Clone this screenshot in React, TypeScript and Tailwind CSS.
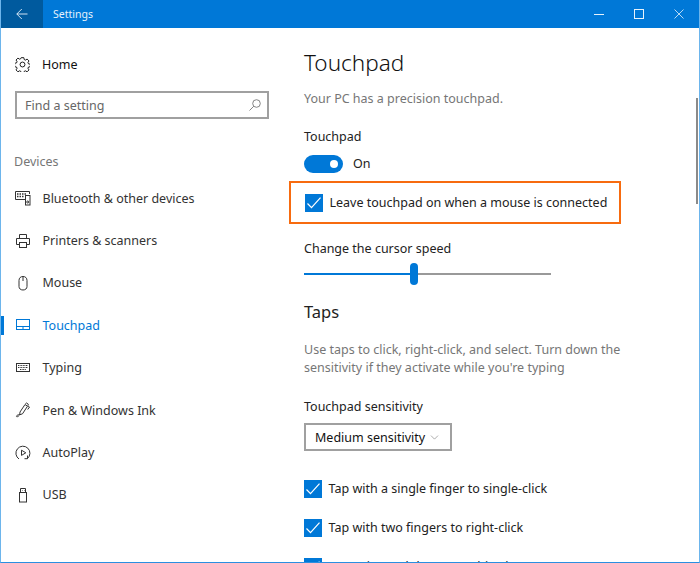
import type { ReactNode } from "react"
import { ChevronDown } from "lucide-react"

function BluetoothDevices() {
  return (
    <svg width="16" height="16" viewBox="0 0 16 16" fill="none" stroke="currentColor" strokeWidth="1">
      <path d="M10 9.500H0.500V1.500H14.500V4" />
      <path d="M2 4h1.500M4.500 4H6M7 4h1.500M9.500 4H11M2 6.500h1.500M4.500 6.500H6M7 6.500h1.500" strokeWidth="1.400" />
      <rect x="10.500" y="5.500" width="4.500" height="9.500" />
      <circle cx="12.700" cy="12" r="1" />
    </svg>
  )
}

function GearIcon() {
  return (
    <svg width="15" height="15" viewBox="0 0 16 16" fill="none" stroke="currentColor" strokeWidth="1">
      <path d="M6.600.7h2.800l.4 2 1.300.6 1.800-1.100 2 2-1.100 1.800.6 1.300 2 .4v2.600l-2 .4-.6 1.300 1.100 1.800-2 2-1.800-1.100-1.300.6-.4 2H6.600l-.4-2-1.300-.6-1.800 1.100-2-2 1.100-1.800-.6-1.300-2-.4V6.700l2-.4.6-1.300-1.100-1.800 2-2 1.800 1.100 1.300-.6z" />
      <circle cx="8" cy="8" r="2.600" />
    </svg>
  )
}

function PrinterIcon() {
  return (
    <svg width="16" height="16" viewBox="0 0 16 16" fill="none" stroke="currentColor" strokeWidth="1">
      <path d="M4.500 5V1.500h7V5" />
      <path d="M4.500 11.500h-3V5.500h13v6h-3" />
      <rect x="4.500" y="9.500" width="7" height="5" />
    </svg>
  )
}

function MouseIcon() {
  return (
    <svg width="16" height="16" viewBox="0 0 16 16" fill="none" stroke="currentColor" strokeWidth="1">
      <path d="M4 5.500C4 3 5.500 1.500 8 1.500s4 1.500 4 4v6c0 2-1.500 3.500-4 3.500s-4-1.500-4-3.500z" />
      <path d="M8 1.500v4.500" />
    </svg>
  )
}

function TouchpadIcon() {
  return (
    <svg width="16" height="16" viewBox="0 0 16 16" fill="none" stroke="currentColor" strokeWidth="1">
      <rect x="1.500" y="2.500" width="13" height="10" />
      <path d="M1.500 9.500h13M8 9.500v3" />
    </svg>
  )
}

function KeyboardIcon() {
  return (
    <svg width="16" height="16" viewBox="0 0 16 16" fill="none" stroke="currentColor" strokeWidth="1">
      <rect x="1.500" y="3.500" width="13" height="8" />
      <path d="M3 5.500h10M3 7.500h10M5 9.500h6" strokeDasharray="1 .6" />
    </svg>
  )
}

function PenIcon() {
  return (
    <svg width="16" height="16" viewBox="0 0 16 16" fill="none" stroke="currentColor" strokeWidth="1">
      <path d="M5 10L10 2.500l2.500 1.700L7.500 11.800l-2.800 1z" />
      <path d="M10.500 1.500l1-.5 1.800 1.200-.3 1.300M12.800 3.800l1.700 1.200-1.800 2.500" />
      <path d="M5 12.800c-1.500-.3-3.500.4-3.500 1.500 0 .9 1.400.4 2.500-.6" />
    </svg>
  )
}

function AutoPlayIcon() {
  return (
    <svg width="16" height="16" viewBox="0 0 16 16" fill="none" stroke="currentColor" strokeWidth="1">
      <path d="M4 14A7 7 0 1 1 12.500 13.500" />
      <path d="M6.500 5.200v5.200l4.300-2.600z" />
      <path d="M12.500 10.500v3.200H9.500" />
    </svg>
  )
}

function UsbIcon() {
  return (
    <svg width="16" height="16" viewBox="0 0 16 16" fill="none" stroke="currentColor" strokeWidth="1">
      <path d="M5.500 5.500V1.500h5v4" />
      <rect x="4.500" y="5.500" width="7" height="9.500" />
      <path d="M7 3.500h.5M9 3.500h.5" />
    </svg>
  )
}

function NavItem({ icon, label, active }: { icon: ReactNode; label: string; active?: boolean }) {
  return (
    <div className={`relative flex h-[42.4px] items-center gap-[11.5px] pl-[14px] ${active ? "text-[#0078d7]" : "text-[#333]"}`}>
      {active && <div className="absolute left-[-1px] top-[12px] h-[19px] w-[4px] bg-[#0078d7]" />}
      <span className="flex w-[16px] justify-center">{icon}</span>
      <span>{label}</span>
    </div>
  )
}

function CheckRow({ label, className }: { label: string; className?: string }) {
  return (
    <div className={`flex items-center gap-[6.5px] text-[#222] ${className ?? ""}`}>
      <span className="flex h-[18px] w-[18px] shrink-0 items-center justify-center bg-[#0078d7]">
        <svg width="18" height="18" viewBox="0 0 18 18" fill="none" stroke="white" strokeWidth="1.200">
          <path d="M2.500 9.500l4 4.200 9-10" />
        </svg>
      </span>
      <span>{label}</span>
    </div>
  )
}

export default function App() {
  return (
    <div className="flex h-[563px] w-[700px] flex-col overflow-hidden border-x border-b border-x-[#6db5ec] border-b-[#2b8fe0] bg-white text-[12.5px] leading-[19px] font-['Noto_Sans',sans-serif]">
      {/* Title bar */}
      <div className="mx-[-1px] flex h-[28px] shrink-0 items-center bg-[#0078d7] text-[10.5px] text-[#e6f2fb]">
        <div className="flex h-full w-[43px] items-center justify-center bg-[#005a9e]">
          <svg width="12" height="12" viewBox="0 0 12 12" fill="none" stroke="#e6f2fb" strokeWidth="0.9">
            <path d="M11.500 6H.8M5.800 1L.8 6l5 5" />
          </svg>
        </div>
        <span className="ml-[10px]">Settings</span>
        <div className="ml-auto flex items-center gap-[30px] pr-[16px]">
          <div className="h-px w-[10px] bg-[#e6f2fb]" />
          <div className="h-[10px] w-[10px] border border-[#e6f2fb]" />
          <svg width="10" height="10" viewBox="0 0 10 10" stroke="#e6f2fb" strokeWidth="0.8">
            <path d="M.5 .5l9 9M9.500 .5l-9 9" />
          </svg>
        </div>
      </div>

      <div className="relative flex min-h-0 flex-1">
        {/* Sidebar */}
        <div className="w-[303px] shrink-0">
          <div className="flex items-center gap-[12px] pl-[14px] pt-[27px] text-[#111]">
            <GearIcon />
            <span>Home</span>
          </div>
          <div className="ml-[14px] mt-[17px] flex h-[28px] w-[254px] items-center justify-between border-2 border-[#a0a0a0] pl-[8px] pr-[6px] text-[#666]">
            <span>Find a setting</span>
            <svg width="12" height="12" viewBox="0 0 12 12" fill="none" stroke="#777" strokeWidth="0.9">
              <circle cx="7.500" cy="4.500" r="3.800" />
              <path d="M4.800 7.200L.5 11.500" />
            </svg>
          </div>
          <div className="ml-[13px] mt-[33px] text-[#767676]">Devices</div>
          <div className="mt-[6px]">
            <NavItem icon={<BluetoothDevices />} label="Bluetooth & other devices" />
            <NavItem icon={<PrinterIcon />} label="Printers & scanners" />
            <NavItem icon={<MouseIcon />} label="Mouse" />
            <NavItem icon={<TouchpadIcon />} label="Touchpad" active />
            <NavItem icon={<KeyboardIcon />} label="Typing" />
            <NavItem icon={<PenIcon />} label="Pen & Windows Ink" />
            <NavItem icon={<AutoPlayIcon />} label="AutoPlay" />
            <NavItem icon={<UsbIcon />} label="USB" />
          </div>
        </div>

        {/* Main column */}
        <div className="min-w-0 flex-1 text-[#222]">
          <h1 className="mt-[17px] text-[22.5px] leading-[36px] font-light text-[#111]">Touchpad</h1>
          <p className="mt-[8px] text-[#767676]">Your PC has a precision touchpad.</p>
          <p className="mt-[19px]">Touchpad</p>
          <div className="mt-[8px] flex items-center gap-[10px]">
            <div className="flex h-[18px] w-[39px] items-center justify-end rounded-full bg-[#0078d7] pr-[5px]">
              <div className="h-[8px] w-[8px] rounded-full bg-white" />
            </div>
            <span>On</span>
          </div>
          <div className="ml-[-15px] mt-[8px] w-[332px] border-2 border-[#f76b0f] py-[10px] pl-[14px]">
            <CheckRow label="Leave touchpad on when a mouse is connected" />
          </div>
          <p className="mt-[15px]">Change the cursor speed</p>
          <div className="relative mt-[5px] flex h-[22px] w-[247px] items-center">
            <div className="h-[2px] w-[110px] bg-[#0078d7]" />
            <div className="h-[2px] flex-1 bg-[#999]" />
            <div className="absolute left-[106px] top-0 h-[22px] w-[8px] rounded-full bg-[#0078d7]" />
          </div>
          <h2 className="mt-[15px] text-[16.5px] leading-[24px]">Taps</h2>
          <p className="mt-[17px] w-[340px] leading-[18px] text-[#767676]">
            Use taps to click, right-click, and select. Turn down the sensitivity if they activate while you're typing
          </p>
          <p className="mt-[20px]">Touchpad sensitivity</p>
          <div className="mt-[7px] flex h-[28px] w-[148px] items-center justify-between border-2 border-[#a0a0a0] pl-[9px] pr-[9px] whitespace-nowrap text-[#111]">
            <span>Medium sensitivity</span>
            <ChevronDown size={13} strokeWidth={1} className="text-[#666]" />
          </div>
          <CheckRow label="Tap with a single finger to single-click" className="mt-[28px]" />
          <CheckRow label="Tap with two fingers to right-click" className="mt-[20px]" />
          <CheckRow label="Tap twice and drag to multi-select" className="mt-[20px]" />
        </div>

        {/* Scrollbar thumb */}
        <div className="absolute right-[1px] top-[70px] h-[106px] w-[2px] bg-[#8a8a8a]" />
      </div>
    </div>
  )
}
